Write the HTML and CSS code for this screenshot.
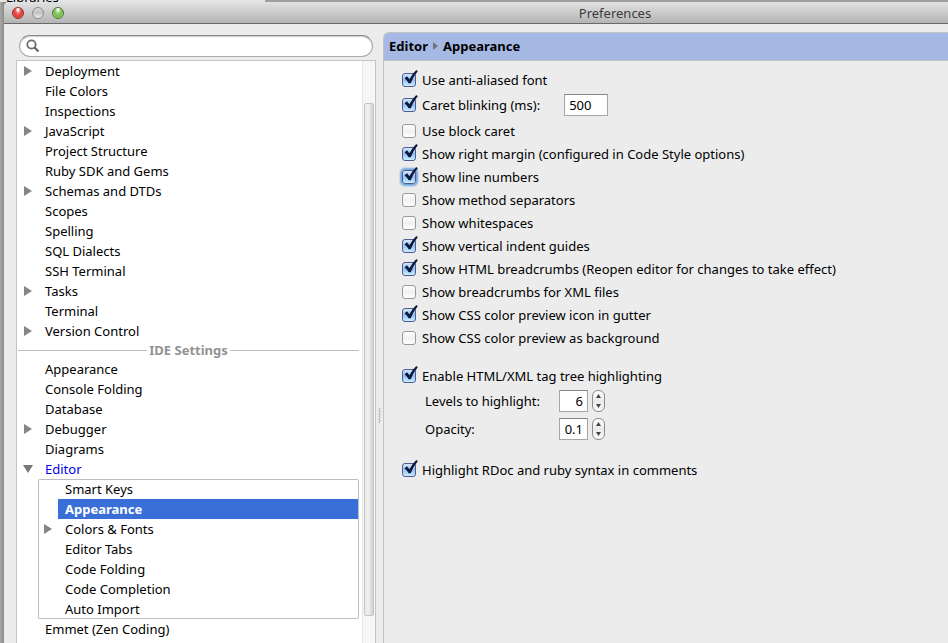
FILE: index.html
```html
<!DOCTYPE html>
<html lang="en">
<head>
<meta charset="utf-8">
<title>Preferences</title>
<link rel="stylesheet" href="styles.css">
</head>
<body>
<svg class="defs" aria-hidden="true">
  <symbol id="tick" viewBox="0 0 18 18"><path d="M3.500 9.300 6 7.300 8.400 10.300Q11 5 15.300 1L16.800 2.200Q12.300 7.500 9.700 14.300L7.600 14.300Q6 11.500 3.500 9.300Z" fill="#0b1c3c"/></symbol>
  <symbol id="right" viewBox="0 0 8 10"><path d="M0 0 8 5 0 10Z" fill="#848484"/></symbol>
  <symbol id="down" viewBox="0 0 10 8"><path d="M0 0H10L5 8Z" fill="#777"/></symbol>
</svg>
<div class="behind"><span>Libraries</span></div>
<div class="window">
  <header class="titlebar">
    <div class="lights">
      <button class="light red" aria-label="Close"></button>
      <button class="light gray" aria-label="Minimize"></button>
      <button class="light green" aria-label="Zoom"></button>
    </div>
    <h1>Preferences</h1>
  </header>
  <div class="content">
    <aside class="sidebar">
      <label class="search">
        <svg width="14" height="14" viewBox="0 0 14 14"><circle cx="5.500" cy="5.500" r="4.200" fill="none" stroke="#6c6c6c" stroke-width="1.800"/><path d="M8.500 8.500 12.500 12.500" stroke="#6c6c6c" stroke-width="2.400"/></svg>
        <input type="text" aria-label="Search">
      </label>
      <div class="treebox">
        <nav class="tree">
          <ul>
            <li><svg class="arrow"><use href="#right"/></svg><a href="#">Deployment</a></li>
            <li><a href="#">File Colors</a></li>
            <li><a href="#">Inspections</a></li>
            <li><svg class="arrow"><use href="#right"/></svg><a href="#">JavaScript</a></li>
            <li><a href="#">Project Structure</a></li>
            <li><a href="#">Ruby SDK and Gems</a></li>
            <li><svg class="arrow"><use href="#right"/></svg><a href="#">Schemas and DTDs</a></li>
            <li><a href="#">Scopes</a></li>
            <li><a href="#">Spelling</a></li>
            <li><a href="#">SQL Dialects</a></li>
            <li><a href="#">SSH Terminal</a></li>
            <li><svg class="arrow"><use href="#right"/></svg><a href="#">Tasks</a></li>
            <li><a href="#">Terminal</a></li>
            <li><svg class="arrow"><use href="#right"/></svg><a href="#">Version Control</a></li>
          </ul>
          <h2>IDE Settings</h2>
          <ul>
            <li><a href="#">Appearance</a></li>
            <li><a href="#">Console Folding</a></li>
            <li><a href="#">Database</a></li>
            <li><svg class="arrow"><use href="#right"/></svg><a href="#">Debugger</a></li>
            <li><a href="#">Diagrams</a></li>
            <li><svg class="arrow open"><use href="#down"/></svg><a class="current" href="#">Editor</a></li>
          </ul>
          <ul class="group">
            <li><a href="#">Smart Keys</a></li>
            <li><a class="selected" href="#">Appearance</a></li>
            <li><svg class="arrow"><use href="#right"/></svg><a href="#">Colors &amp; Fonts</a></li>
            <li><a href="#">Editor Tabs</a></li>
            <li><a href="#">Code Folding</a></li>
            <li><a href="#">Code Completion</a></li>
            <li><a href="#">Auto Import</a></li>
          </ul>
          <ul>
            <li><a href="#">Emmet (Zen Coding)</a></li>
          </ul>
        </nav>
        <div class="scrollbar"><div class="thumb"></div></div>
      </div>
    </aside>
    <div class="splitter"><div class="grip"></div></div>
    <main class="panel">
      <div class="crumbs"><span>Editor</span><svg width="5" height="8" viewBox="0 0 8 10" preserveAspectRatio="none"><path d="M0 0 8 5 0 10Z" fill="#6f747f"/></svg><span>Appearance</span></div>
      <form class="options">
        <label class="option"><span class="check"><input type="checkbox" checked><svg><use href="#tick"/></svg></span>Use anti-aliased font</label>
        <div class="option caret">
          <label class="option"><span class="check"><input type="checkbox" checked><svg><use href="#tick"/></svg></span>Caret blinking (ms):</label>
          <input class="field delay" type="text" value="500" aria-label="Caret blinking delay">
        </div>
        <label class="option"><span class="check"><input type="checkbox"><svg><use href="#tick"/></svg></span>Use block caret</label>
        <label class="option"><span class="check"><input type="checkbox" checked><svg><use href="#tick"/></svg></span>Show right margin (configured in Code Style options)</label>
        <label class="option"><span class="check focus"><input type="checkbox" checked><svg><use href="#tick"/></svg></span>Show line numbers</label>
        <label class="option"><span class="check"><input type="checkbox"><svg><use href="#tick"/></svg></span>Show method separators</label>
        <label class="option"><span class="check"><input type="checkbox"><svg><use href="#tick"/></svg></span>Show whitespaces</label>
        <label class="option"><span class="check"><input type="checkbox" checked><svg><use href="#tick"/></svg></span>Show vertical indent guides</label>
        <label class="option"><span class="check"><input type="checkbox" checked><svg><use href="#tick"/></svg></span>Show HTML breadcrumbs (Reopen editor for changes to take effect)</label>
        <label class="option"><span class="check"><input type="checkbox"><svg><use href="#tick"/></svg></span>Show breadcrumbs for XML files</label>
        <label class="option"><span class="check"><input type="checkbox" checked><svg><use href="#tick"/></svg></span>Show CSS color preview icon in gutter</label>
        <label class="option"><span class="check"><input type="checkbox"><svg><use href="#tick"/></svg></span>Show CSS color preview as background</label>
        <label class="option section"><span class="check"><input type="checkbox" checked><svg><use href="#tick"/></svg></span>Enable HTML/XML tag tree highlighting</label>
        <div class="spin">
          <label for="levels">Levels to highlight:</label>
          <input class="field" id="levels" type="text" value="6">
          <div class="stepper"><button type="button" aria-label="Increase levels"></button><button type="button" aria-label="Decrease levels"></button></div>
        </div>
        <div class="spin">
          <label for="opacity">Opacity:</label>
          <input class="field" id="opacity" type="text" value="0.1">
          <div class="stepper"><button type="button" aria-label="Increase opacity"></button><button type="button" aria-label="Decrease opacity"></button></div>
        </div>
        <label class="option section"><span class="check"><input type="checkbox" checked><svg><use href="#tick"/></svg></span>Highlight RDoc and ruby syntax in comments</label>
      </form>
    </main>
  </div>
</div>
</body>
</html>
```
FILE: styles.css
```css
* { box-sizing: border-box; }
body {
  margin: 0;
  height: 100vh;
  overflow: hidden;
  display: flex;
  flex-direction: column;
  background: linear-gradient(90deg, #a9a7a5, #8c8a88 4px);
  color: #000;
  font: 13px/20px "Noto Sans", "Open Sans", sans-serif;
}
input, button { font: inherit; margin: 0; padding: 0; }
ul { list-style: none; margin: 0; padding: 0; }
.defs { position: absolute; width: 0; height: 0; }

.behind {
  height: 2px;
  overflow: hidden;
  display: flex;
  align-items: flex-end;
  padding-left: 6px;
  background: linear-gradient(90deg, #e4e4e4 265px, #a0a0a0 265px);
}
.behind span { line-height: 10px; }

.window {
  flex: 1;
  min-height: 0;
  margin-left: 4px;
  display: flex;
  flex-direction: column;
  background: #ececec;
  border-top-left-radius: 5px;
}
.titlebar {
  height: 22px;
  flex: none;
  display: grid;
  grid-template-columns: 1fr auto 1fr;
  align-items: center;
  padding-left: 8px;
  background: linear-gradient(#e2e2e2, #b4b4b4);
  border-bottom: 1px solid #686868;
  border-top-left-radius: 5px;
}
.titlebar h1 {
  grid-column: 2;
  margin: 0;
  padding-left: 270px;
  font-size: 13px;
  font-weight: 400;
  color: #3c3c3c;
}
.lights { display: flex; gap: 8px; }
.light {
  width: 12px;
  height: 12px;
  border: 1px solid #777;
  border-radius: 50%;
}
.red { border-color: #8c2f2b; background: radial-gradient(ellipse at 50% 15%, #fff 8%, #f0625f 35%, #e23a38 60%, #ff9b95); }
.gray { border-color: #8d8d8d; background: linear-gradient(#d8d8d8, #c0c0c0 45%, #eee); }
.green { border-color: #477832; background: radial-gradient(ellipse at 50% 15%, #fff 8%, #91cc6b 35%, #79bd4c 60%, #c9f59f); }

.content {
  flex: 1;
  min-height: 0;
  display: grid;
  grid-template-columns: 372px 7px 1fr;
}
.sidebar {
  min-height: 0;
  padding: 11px 0 0 12px;
  display: flex;
  flex-direction: column;
}
.search {
  height: 22px;
  flex: none;
  margin: 0 3px;
  padding-left: 6px;
  display: flex;
  align-items: center;
  gap: 6px;
  background: #fff;
  border: 1px solid #aaa;
  border-top-color: #888;
  border-radius: 11px;
  box-shadow: inset 0 1px 1px #ccc;
}
.search input {
  flex: 1;
  border: 0;
  outline: 0;
  background: transparent;
}
.treebox {
  flex: 1;
  min-height: 0;
  margin-top: 3px;
  display: flex;
  overflow: hidden;
  background: #fff;
  border: 1px solid #c4c4c4;
  border-bottom: 0;
}
.tree { flex: 1; padding: 0 3px 0 1px; }
.tree li {
  height: 20px;
  display: grid;
  grid-template-columns: 27px 1fr;
  align-items: center;
}
.tree a {
  grid-column: 2;
  color: inherit;
  text-decoration: none;
}
.tree .arrow {
  grid-row: 1;
  width: 8px;
  height: 10px;
  margin-left: 6px;
}
.tree .open { width: 10px; height: 8px; margin-left: 5px; }
.tree .current { color: #0000f0; }
.tree h2 {
  margin: 0;
  display: flex;
  align-items: center;
  gap: 2px;
  font-size: 13px;
  line-height: 18px;
  color: #929292;
}
.tree h2::before, .tree h2::after {
  content: "";
  flex: 1;
  height: 1px;
  background: #bdbdbd;
}
.group {
  margin-left: 20px;
  border-radius: 2px;
  box-shadow: inset 0 0 0 1px #bdbdbd;
}
.tree .selected {
  margin: 0 1px 0 -7px;
  padding-left: 7px;
  background: #3a6fd8;
  color: #fff;
  font-weight: 700;
}
.scrollbar {
  width: 13px;
  padding: 42px 1px 27px;
  display: flex;
  background: #f6f6f6;
  border-left: 1px solid #e6e6e6;
}
.thumb {
  flex: 1;
  background: linear-gradient(90deg, #e8e8e8, #f0f0f0 40%, #d0d0d0);
  border: 1px solid #c4c4c4;
  border-radius: 2px;
}
.splitter {
  display: flex;
  align-items: center;
  justify-content: center;
  padding-top: 163px;
}
.grip {
  width: 3px;
  height: 15px;
  background: conic-gradient(#c4c4c4 25%, #ececec 0 50%, #c4c4c4 0 75%, #ececec 0) 0 0 / 3px 3px;
}

.panel {
  margin-top: 8px;
  border: 1px solid #c4c4c4;
  border-width: 1px 0 0 1px;
  border-top-left-radius: 6px;
  overflow: hidden;
}
.crumbs {
  height: 28px;
  padding: 0 5px 1px;
  display: flex;
  align-items: center;
  gap: 5px;
  background: #a6b9e4;
  border-bottom: 1px solid #c4c4c4;
  font-weight: 700;
}
.options { padding: 7px 18px; }
.option {
  height: 23px;
  display: flex;
  align-items: center;
  gap: 6px;
}
.caret { height: 28px; gap: 24px; }
.section { margin-top: 15px; }
.check { position: relative; display: flex; }
.check input {
  appearance: none;
  width: 14px;
  height: 14px;
  border: 1px solid #999;
  border-radius: 3px;
  background: linear-gradient(#fff, #f0f0f0 50%, #fff);
}
.check input:checked {
  border-color: #525a94;
  background: linear-gradient(#d8e8fa, #93c0f2 50%, #c8f0ff);
}
.check svg {
  position: absolute;
  left: -1px;
  bottom: 0;
  width: 18px;
  height: 18px;
  display: none;
  pointer-events: none;
}
.check input:checked + svg { display: block; }
.focus input { box-shadow: 0 0 2px 2px #6fa3de; }
.field {
  height: 22px;
  width: 29px;
  padding-right: 4px;
  border: 1px solid #a6a6a6;
  border-top-color: #858585;
  border-radius: 0;
  background: #fff;
  text-align: right;
}
.delay { width: 44px; padding-left: 4px; text-align: left; }
.spin {
  height: 28px;
  padding-left: 23px;
  display: grid;
  grid-template-columns: 130px 29px 13px;
  column-gap: 4px;
  align-items: center;
}
.stepper {
  height: 22px;
  display: flex;
  flex-direction: column;
  border: 1px solid #8c8c8c;
  border-radius: 6px;
  background: linear-gradient(#fff, #eaeaea 50%, #f8f8f8);
}
.stepper button {
  flex: 1;
  display: flex;
  align-items: center;
  justify-content: center;
  border: 0;
  background: transparent;
}
.stepper button::before {
  content: "";
  width: 5px;
  height: 4px;
  background: #444;
  clip-path: polygon(50% 0, 100% 100%, 0 100%);
}
.stepper button:last-child::before { clip-path: polygon(0 0, 100% 0, 50% 100%); }
```
